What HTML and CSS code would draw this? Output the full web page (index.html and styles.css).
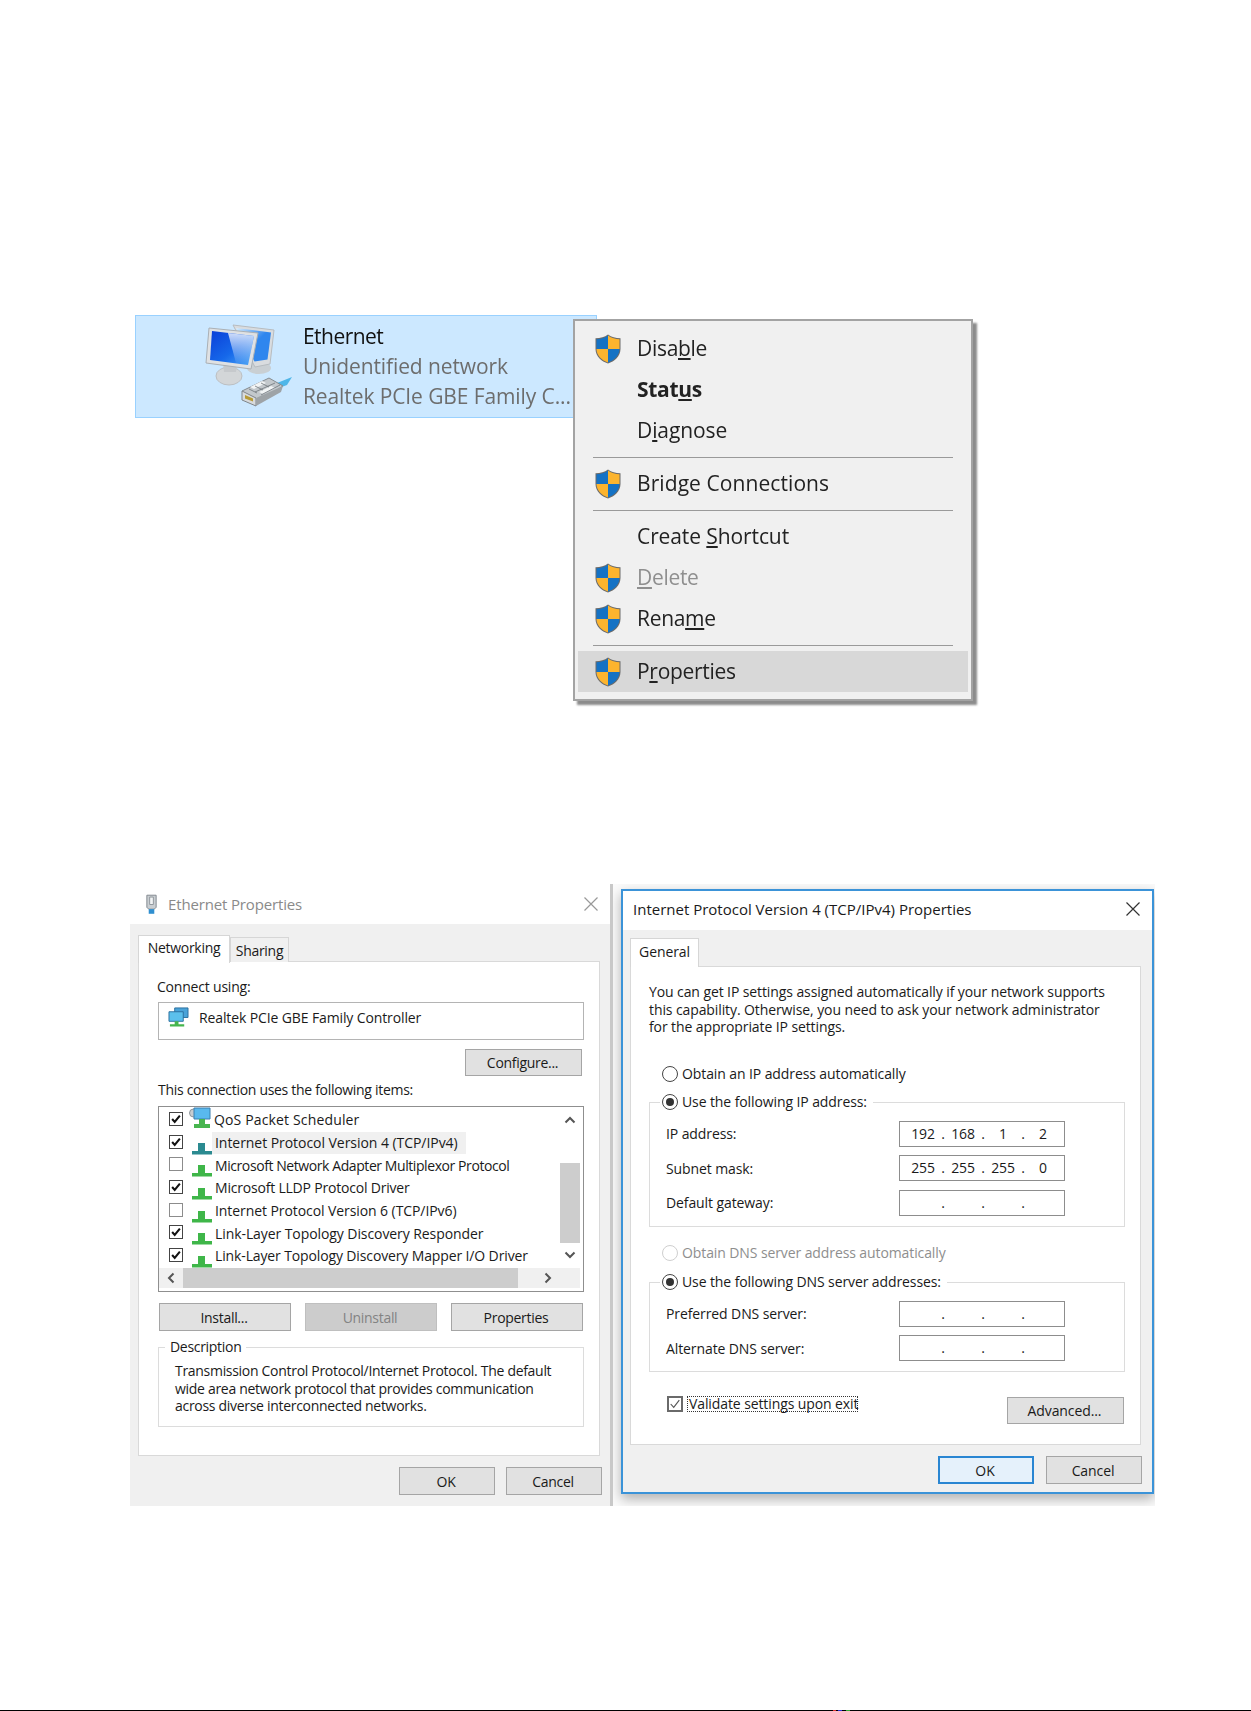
FILE: index.html
```html
<!DOCTYPE html>
<html lang="en">
<head>
<meta charset="utf-8">
<title>Ethernet properties</title>
<link rel="stylesheet" href="styles.css">
</head>
<body>
<svg class="defs" aria-hidden="true">
  <defs>
    <linearGradient id="scr" x1="0" y1="0" x2="1" y2="1"><stop offset="0" stop-color="#0b3fd8"/><stop offset=".55" stop-color="#1668ea"/><stop offset="1" stop-color="#4aa6f6"/></linearGradient>
    <linearGradient id="gl" x1="0" y1="0" x2="1" y2="1"><stop offset="0" stop-color="#d8eeff"/><stop offset=".5" stop-color="#2f86ee"/><stop offset="1" stop-color="#2f86ee"/></linearGradient>
    <linearGradient id="sh" x1="0" y1="0" x2="0" y2="1"><stop offset="0" stop-color="#fff" stop-opacity=".8"/><stop offset="1" stop-color="#fff" stop-opacity="0"/></linearGradient>
    <clipPath id="shc"><path d="M13 1.500C9.500 4 5.500 5.200 1.500 5.200V15C1.500 21.500 7 26.500 13 28.500C19 26.500 24.500 21.500 24.500 15V5.200C20.500 5.200 16.500 4 13 1.500Z"/></clipPath>
    <symbol id="shield" viewBox="0 0 26 30">
      <path d="M13 .5C9.500 3 5.500 4.200.5 4.200V15C.5 22 6.500 27.500 13 29.500C19.500 27.500 25.500 22 25.500 15V4.200C20.500 4.200 16.500 3 13 .5Z" fill="#6b6b6b"/>
      <g clip-path="url(#shc)">
        <rect x="0" y="0" width="13" height="15" fill="#1572c4"/>
        <rect x="13" y="0" width="13" height="15" fill="#fcb42e"/>
        <rect x="0" y="15" width="13" height="15" fill="#fcb42e"/>
        <rect x="13" y="15" width="13" height="15" fill="#1572c4"/>
      </g>
    </symbol>
    <symbol id="proto" viewBox="0 0 22 13">
      <path d="M7 1h7v8h-7z M1 9h20v3.500H1z"/>
    </symbol>
    <symbol id="check" viewBox="0 0 14 14">
      <path d="M2.500 7l3 3.500L11.500 3" fill="none" stroke="#111" stroke-width="2.400"/>
    </symbol>
  </defs>
</svg>

<main class="page">
  <section class="tile">
    <svg class="tile-icon" viewBox="0 1 108 100" aria-hidden="true">
      <ellipse cx="64" cy="53" rx="12" ry="6" fill="#c9cfd3"/>
      <path d="M38 10l41 5-4 34-15 3z" fill="#d9dcdf" stroke="#b7bcc0"/>
      <path d="M41 13l35 4.500-3.500 27-13 2z" fill="url(#gl)"/>
      <ellipse cx="34" cy="61" rx="13" ry="9" fill="#d3d6d8" stroke="#bcbfc2"/>
      <path d="M28 47l14 2-1 8H29z" fill="#c6c9cc"/>
      <path d="M14 13l49 5-7 36-45-6z" fill="#dfe1e3" stroke="#aab0b5"/>
      <path d="M17 16l42 5-6 29-38-5z" fill="url(#scr)"/>
      <path d="M33 18l26 3-6 29-12-2z" fill="url(#sh)"/>
      <path d="M82 68l15-6-5 8-8 3z" fill="#4fb6e8"/>
      <path d="M47 76l27-13 14 8-27 18z" fill="#c3c8cc" stroke="#858b90"/>
      <path d="M47 76l14 7v8l-14-6z" fill="#d8dadc" stroke="#7f858a"/>
      <path d="M50 80l8 3.500v3l-8-3z" fill="#b79a35"/>
      <path d="M55 72l12-6 4 2-12 6z M64 77l12-6 4 2-12 6z" fill="#f2f4f5"/>
      <path d="M60 77l20-9M66 80l19-10M54 74l8 4M60 71l8 4M66 68l8 4" stroke="#6f757a" stroke-width=".8" fill="none"/>
      <path d="M61 83l27-12-2 6-25 14z" fill="#9ea3a7"/>
    </svg>
    <div class="tile-text">
      <div class="tile-name">Ethernet</div>
      <div class="tile-sub">Unidentified network</div>
      <div class="tile-sub">Realtek PCIe GBE Family C...</div>
    </div>
    <nav class="menu">
      <div class="mi"><svg class="shield"><use href="#shield"/></svg><span class="mt">Disa<u>b</u>le</span></div>
      <div class="mi mi-bold"><span class="noicon"></span><span class="mt">Stat<u>u</u>s</span></div>
      <div class="mi mi-diag"><span class="noicon"></span><span class="mt">D<u>i</u>agnose</span></div>
      <div class="msep"></div>
      <div class="mi mi-wide"><svg class="shield"><use href="#shield"/></svg><span class="mt">Brid<u>g</u>e Connections</span></div>
      <div class="msep"></div>
      <div class="mi mi-create"><span class="noicon"></span><span class="mt">Create <u>S</u>hortcut</span></div>
      <div class="mi mi-off"><svg class="shield"><use href="#shield"/></svg><span class="mt"><u>D</u>elete</span></div>
      <div class="mi"><svg class="shield"><use href="#shield"/></svg><span class="mt">Rena<u>m</u>e</span></div>
      <div class="msep"></div>
      <div class="mi mi-hot"><svg class="shield"><use href="#shield"/></svg><span class="mt">P<u>r</u>operties</span></div>
    </nav>
  </section>

  <section class="shots">
    <div class="eth">
      <header class="eth-title">
        <svg class="plug" viewBox="0 0 14 22" aria-hidden="true"><path d="M2 1h10v13l-2 2H4l-2-2z" fill="#c9ced2" stroke="#7d858b"/><path d="M5 3h4v8H5z" fill="#f2f4f5" stroke="#8d9398"/><path d="M4 16h6v5H4z" fill="#2f8fd0"/></svg>
        <span class="eth-name">Ethernet Properties</span>
        <svg class="x x-off" viewBox="0 0 14 14" aria-hidden="true"><path d="M.5.5l13 13M13.500.5l-13 13"/></svg>
      </header>
      <div class="eth-body">
        <div class="tabs">
          <div class="tab tab-on tab-net"><span>Networking</span></div>
          <div class="tab tab-off">Sharing</div>
        </div>
        <div class="panel eth-panel">
          <div class="lbl lbl-connect">Connect using:</div>
          <div class="adapter">
            <svg class="adapter-icon" viewBox="0 0 22 21" aria-hidden="true"><path d="M7 1h14v10H7z" fill="#4aa3d8" stroke="#2a6f9e"/><path d="M1 5h15v10H1z" fill="#5cc0ec" stroke="#2a6f9e"/><path d="M7 15h4v3H7z M2 18h15v2.500H2z" fill="#45b54d"/></svg>
            <span>Realtek PCIe GBE Family Controller</span>
          </div>
          <div class="cfg-row"><div class="btn btn-cfg">Configure...</div></div>
          <div class="lbl lbl-items">This connection uses the following items:</div>
          <div class="list">
            <div class="rows">
              <div class="row">
                <span class="cb cb-on"><svg><use href="#check"/></svg></span>
                <svg class="qos" viewBox="0 0 22 22" aria-hidden="true"><circle cx="4.500" cy="6" r="4" fill="#c7ccd0" stroke="#8f969b"/><path d="M5 1h16v11H5z" fill="#59b9ee" stroke="#3a7fae"/><path d="M10 12h6v5h-6z M5 17h16v4H5z" fill="#48b54f"/></svg>
                <span class="rt rt-qos">QoS Packet Scheduler</span>
              </div>
              <div class="row">
                <span class="cb cb-on"><svg><use href="#check"/></svg></span>
                <svg class="proto proto-t"><use href="#proto"/></svg>
                <span class="rt rt-sel">Internet Protocol Version 4 (TCP/IPv4)</span>
              </div>
              <div class="row">
                <span class="cb"></span>
                <svg class="proto"><use href="#proto"/></svg>
                <span class="rt rt-narrow">Microsoft Network Adapter Multiplexor Protocol</span>
              </div>
              <div class="row">
                <span class="cb cb-on"><svg><use href="#check"/></svg></span>
                <svg class="proto"><use href="#proto"/></svg>
                <span class="rt rt-lldp">Microsoft LLDP Protocol Driver</span>
              </div>
              <div class="row">
                <span class="cb"></span>
                <svg class="proto"><use href="#proto"/></svg>
                <span class="rt">Internet Protocol Version 6 (TCP/IPv6)</span>
              </div>
              <div class="row">
                <span class="cb cb-on"><svg><use href="#check"/></svg></span>
                <svg class="proto"><use href="#proto"/></svg>
                <span class="rt">Link-Layer Topology Discovery Responder</span>
              </div>
              <div class="row">
                <span class="cb cb-on"><svg><use href="#check"/></svg></span>
                <svg class="proto"><use href="#proto"/></svg>
                <span class="rt rt-map">Link-Layer Topology Discovery Mapper I/O Driver</span>
              </div>
            </div>
            <div class="vbar">
              <svg class="ar" viewBox="0 0 12 8" aria-hidden="true"><path d="M1.500 6.500L6 2l4.500 4.500"/></svg>
              <div class="vthumb"></div>
              <svg class="ar" viewBox="0 0 12 8" aria-hidden="true"><path d="M1.500 1.500L6 6l4.500-4.500"/></svg>
            </div>
            <div class="hbar">
              <svg class="arh" viewBox="0 0 8 12" aria-hidden="true"><path d="M6.500 1.500L2 6l4.500 4.500"/></svg>
              <div class="hthumb"></div>
              <svg class="arh" viewBox="0 0 8 12" aria-hidden="true"><path d="M1.500 1.500L6 6l-4.500 4.500"/></svg>
            </div>
          </div>
          <div class="btn-row">
            <div class="btn btn-w">Install...</div>
            <div class="btn btn-w btn-off">Uninstall</div>
            <div class="btn btn-w">Properties</div>
          </div>
          <div class="desc">
            <span class="legend">Description</span>
            <p>Transmission Control Protocol/Internet Protocol. The default<br>wide area network protocol that provides communication<br>across diverse interconnected networks.</p>
          </div>
        </div>
        <div class="foot eth-foot">
          <div class="btn btn-foot">OK</div>
          <div class="btn btn-foot">Cancel</div>
        </div>
      </div>
    </div>

    <div class="ip-wrap">
      <div class="ip">
        <header class="ip-title">
          <span>Internet Protocol Version 4 (TCP/IPv4) Properties</span>
          <svg class="x" viewBox="0 0 14 14" aria-hidden="true"><path d="M.5.5l13 13M13.500.5l-13 13"/></svg>
        </header>
        <div class="ip-body">
          <div class="tab tab-on tab-gen"><span>General</span></div>
          <div class="panel ip-panel">
            <p class="intro">You can get IP settings assigned automatically if your network supports<br>this capability. Otherwise, you need to ask your network administrator<br>for the appropriate IP settings.</p>
            <div class="opt opt-first"><span class="radio"></span>Obtain an IP address automatically</div>
            <div class="grp grp-ip">
              <div class="opt opt-leg"><span class="radio radio-on"></span>Use the following IP address:</div>
              <div class="fld"><span>IP address:</span>
                <div class="ipbox"><b>192</b><i>.</i><b>168</b><i>.</i><b>1</b><i>.</i><b>2</b></div></div>
              <div class="fld"><span>Subnet mask:</span>
                <div class="ipbox"><b>255</b><i>.</i><b>255</b><i>.</i><b>255</b><i>.</i><b>0</b></div></div>
              <div class="fld"><span>Default gateway:</span>
                <div class="ipbox"><b></b><i>.</i><b></b><i>.</i><b></b><i>.</i><b></b></div></div>
            </div>
            <div class="opt opt-off"><span class="radio radio-off"></span>Obtain DNS server address automatically</div>
            <div class="grp grp-dns">
              <div class="opt opt-leg"><span class="radio radio-on"></span>Use the following DNS server addresses:</div>
              <div class="fld"><span>Preferred DNS server:</span>
                <div class="ipbox"><b></b><i>.</i><b></b><i>.</i><b></b><i>.</i><b></b></div></div>
              <div class="fld"><span>Alternate DNS server:</span>
                <div class="ipbox"><b></b><i>.</i><b></b><i>.</i><b></b><i>.</i><b></b></div></div>
            </div>
            <div class="val-row">
              <span class="vcb"><svg viewBox="0 0 14 14" aria-hidden="true"><path d="M2 7l3.500 4L12 2.500" fill="none" stroke="#555" stroke-width="1.300"/></svg></span>
              <span class="vtxt">Validate settings upon exit</span>
              <div class="btn btn-adv">Advanced...</div>
            </div>
          </div>
          <div class="foot ip-foot">
            <div class="btn btn-foot btn-def">OK</div>
            <div class="btn btn-foot">Cancel</div>
          </div>
        </div>
      </div>
    </div>
  </section>

  <div class="rule"></div>
</main>
</body>
</html>
```
FILE: styles.css
```css
* { box-sizing: border-box; }
html, body { margin: 0; padding: 0; background: #fff; }
body { width: 1251px; height: 1711px; overflow: hidden; }
.defs { position: absolute; width: 0; height: 0; }
.page {
  width: 1251px; height: 1711px; padding-top: 315px;
  font-family: "Open Sans", "Noto Sans", sans-serif; color: #1a1a1a;
  filter: blur(.4px);
}

/* Network tile */
.tile {
  position: relative; display: flex; width: 462px; height: 103px; margin-left: 135px;
  background: #cce8ff; border: 1px solid #99d1ff; padding-left: 59px;
}
.tile-icon { width: 108px; height: 100px; flex: none; }
.tile-text { padding-top: 5px; font-size: 21px; line-height: 30px; white-space: nowrap; overflow: hidden; }
.tile-name { color: #111; letter-spacing: -.55px; }
.tile-sub { color: #6d6d6d; letter-spacing: -.1px; }

/* Context menu */
.menu {
  position: absolute; left: 437px; top: 3px; width: 400px; height: 382px; padding: 7px 3px;
  background: #f0f0f0; border: 2px solid #a3a3a3; box-shadow: 4px 4px 2px #8c8c8c;
  font-size: 21px; letter-spacing: -.3px; color: #222;
}
.mi { display: flex; align-items: center; gap: 16px; height: 41px; padding-left: 17px; }
.mt { margin-top: -2px; }
.mi-bold { font-weight: 700; }
.mi-diag { letter-spacing: -.1px; }
.mi-wide { letter-spacing: .08px; }
.mi-create { letter-spacing: -.1px; }
.mi-off { color: #8f8f8f; }
.mi-hot { background: #d8d8d8; }
.shield, .noicon { width: 26px; height: 30px; flex: none; display: block; }
.msep { height: 12px; margin: 0 15px; position: relative; }
.msep::after { content: ""; display: block; height: 1px; margin-top: 6px; background: #9a9a9a; position: absolute; left: 0; right: 0; }

/* Lower composition */
.shots { display: flex; margin: 466px 0 0 130px; height: 622px; }

.eth { width: 480px; height: 622px; display: flex; flex-direction: column; font-size: 14px; letter-spacing: -.3px; }
.eth-title { display: flex; align-items: center; height: 40px; padding: 0 12px 0 15px; background: #fff; }
.plug { width: 13px; height: 21px; flex: none; }
.eth-name { margin-left: 10px; font-size: 15px; letter-spacing: -.15px; color: #8a8a8a; flex: 1; }
.x { width: 14px; height: 14px; flex: none; }
.x path { fill: none; stroke: #333; stroke-width: 1.200; }
.x-off path { stroke: #999; }
.eth-body { flex: 1; background: #f0f0f0; padding: 11px 8px 0 8px; }
.tabs { display: flex; height: 26px; align-items: flex-start; position: relative; }
.tab { border: 1px solid #d6d6d6; border-bottom: 0; display: flex; align-items: center; justify-content: center; }
.tab-on { width: 92px; height: 28px; background: #fff; position: relative; z-index: 1; }
.tab-net span { margin-top: -4px; }
.tab-off { width: 59px; height: 25px; margin-top: 2px; background: #f0f0f0; }

.panel { background: #fff; border: 1px solid #d9d9d9; }
.eth-panel { width: 462px; height: 495px; padding: 0 15px 0 19px; }
.lbl { height: 20px; line-height: 20px; white-space: nowrap; }
.lbl-connect { margin-top: 15px; margin-left: -1px; letter-spacing: -.2px; }
.adapter {
  display: flex; align-items: center; gap: 10px; height: 38px; margin: 5px 0 0; padding: 0 0 8px 9px;
  border: 1px solid #b4b4b4; letter-spacing: -.12px;
}
.adapter-icon { width: 21px; height: 20px; flex: none; }
.cfg-row { display: flex; justify-content: flex-end; margin-top: 9px; padding-right: 2px; }
.btn {
  display: flex; align-items: center; justify-content: center; background: #e1e1e1;
  border: 1px solid #a5a5a5; height: 28px; white-space: nowrap; padding-right: 2px;
}
.btn-cfg { width: 117px; height: 27px; }
.lbl-items { margin-top: 4px; }

.list { position: relative; height: 186px; margin-top: 6px; border: 1px solid #8f8f8f; display: grid; grid-template-columns: 1fr 20px; grid-template-rows: 161px 20px; padding-right: 3px; padding-bottom: 3px; }
.rows { overflow: hidden; padding-top: 2px; letter-spacing: -.08px; }
.row { display: flex; align-items: center; height: 22.700px; white-space: nowrap; padding-left: 10px; }
.cb { width: 14px; height: 14px; flex: none; border: 1px solid #8c8c8c; background: #fff; margin-top: -3px; display: block; }
.cb-on { border-color: #444; }
.cb svg { display: block; width: 12px; height: 12px; }
.qos { width: 22px; height: 22px; flex: none; margin: -4px 0 0 6px; }
.proto { width: 22px; height: 13px; flex: none; margin: 10px 0 0 8px; color: #3fb649; fill: currentColor; }
.proto-t { color: #2b8a90; }
.rt { margin-left: -2px; padding: 0 4px; line-height: 22px; }
.rt-qos { margin-left: 0; padding-left: 3px; letter-spacing: .15px; }
.rt-sel { background: #f0f0f0; margin-left: -1px; padding: 0 6px 0 3px; width: 254px; letter-spacing: -.05px; }
.rt-narrow { letter-spacing: -.42px; }
.rt-lldp { letter-spacing: -.2px; }
.rt-map { letter-spacing: -.13px; }
.vbar { grid-column: 2; grid-row: 1; display: flex; flex-direction: column; background: #fff; align-items: stretch; }
.ar { width: 12px; height: 8px; margin: 9px 4px 0; flex: none; }
.ar path, .arh path { fill: none; stroke: #555; stroke-width: 2; }
.vthumb { height: 80px; margin-top: 39px; background: #cdcdcd; }
.vthumb + .ar { margin-top: 8px; }
.hbar { grid-column: 1 / 3; grid-row: 2; display: flex; align-items: center; background: #f0f0f0; }
.arh { width: 8px; height: 12px; margin-left: 8px; flex: none; }
.hthumb { width: 335px; height: 20px; margin-left: 8px; background: #cdcdcd; }
.hthumb + .arh { margin-left: 26px; }

.btn-row { display: flex; gap: 14px; margin: 11px 0 0 1px; }
.btn-w { width: 132px; }
.btn-off { background: #ccc; color: #838383; border-color: #bfbfbf; }
.desc { position: relative; height: 80px; margin-top: 16px; border: 1px solid #dcdcdc; padding: 14px 0 0 16px; }
.legend { position: absolute; left: 6px; top: -11px; background: #fff; padding: 0 5px; line-height: 20px; }
.desc p { margin: 0; line-height: 17.500px; white-space: nowrap; }
.foot { display: flex; justify-content: flex-end; gap: 12px; margin-top: 11px; }
.eth-foot { gap: 11px; }
.btn-foot { width: 96px; }

/* IPv4 dialog */
.ip-wrap { width: 545px; height: 622px; padding: 5px 0 0 8px; background: #fbfbfb; border-left: 3px solid #c8c8c8; overflow: hidden; }
.ip { width: 533px; height: 605px; border: 2px solid #3b93d8; background: #f0f0f0; display: flex; flex-direction: column; box-shadow: 0 5px 12px rgba(0,0,0,.3); font-size: 14px; letter-spacing: -.1px; }
.ip-title { display: flex; align-items: center; justify-content: space-between; height: 39px; padding: 0 12px 3px 10px; background: #fff; font-size: 15px; letter-spacing: 0; }
.ip-body { flex: 1; padding: 8px 10px 0 7px; }
.tab-gen { width: 69px; height: 29px; margin-bottom: -1px; }
.tab-gen span { margin-top: -4px; }
.ip-panel { width: 511px; height: 479px; padding: 16px 15px 0 18px; }
.intro { margin: 0; line-height: 17.500px; white-space: nowrap; }
.opt { display: flex; align-items: center; gap: 4px; height: 20px; padding-left: 13px; white-space: nowrap; }
.opt-first { margin-top: 28px; }
.opt-off { margin-top: 16px; color: #8e8e8e; }
.opt-leg { position: absolute; top: -11px; left: 10px; padding-left: 2px; padding-right: 6px; background: #fff; }
.radio { width: 16px; height: 16px; border: 1px solid #444; border-radius: 50%; background: #fff; flex: none; position: relative; }
.radio-on::after { content: ""; position: absolute; left: 3px; top: 3px; width: 8px; height: 8px; border-radius: 50%; background: #333; }
.radio-off { border-color: #cfcfcf; }
.grp { position: relative; border: 1px solid #dcdcdc; padding: 18px 59px 0 16px; }
.grp-ip { height: 125px; margin-top: 18px; }
.grp-dns { height: 90px; margin-top: 19px; }
.fld { display: flex; justify-content: space-between; align-items: center; height: 26px; margin-bottom: 8.500px; }
.ipbox { width: 166px; height: 26px; border: 1px solid #8d8d8d; background: #fff; display: grid; grid-template-columns: 36px 4px 36px 4px 36px 4px 36px; padding-left: 5px; line-height: 23px; }
.ipbox b { font-weight: 400; text-align: center; }
.ipbox i { font-style: normal; text-align: center; display: flex; justify-content: center; }
.val-row { display: flex; align-items: flex-start; margin-top: 24px; padding-left: 18px; }
.vcb { width: 16px; height: 16px; border: 2px solid #6a6a6a; background: #fff; flex: none; display: block; }
.vcb svg { display: block; width: 12px; height: 12px; }
.vtxt { margin-left: 4px; border: 1px dotted #333; height: 16px; line-height: 14px; padding: 0 1px; white-space: nowrap; width: 171px; }
.btn-adv { width: 117px; height: 27px; margin: 1px 0 0 149px; }
.ip-foot { margin-top: 11px; }
.btn-def { background: #e5f1fb; border: 2px solid #2a86d2; }

.rule { height: 1px; margin-top: 204px; background: linear-gradient(90deg, #000 0 833px, #d33 833px 836px, #000 836px 838px, #33d 838px 842px, #000 842px 846px, #3a3 846px 850px, #000 850px); }
```
